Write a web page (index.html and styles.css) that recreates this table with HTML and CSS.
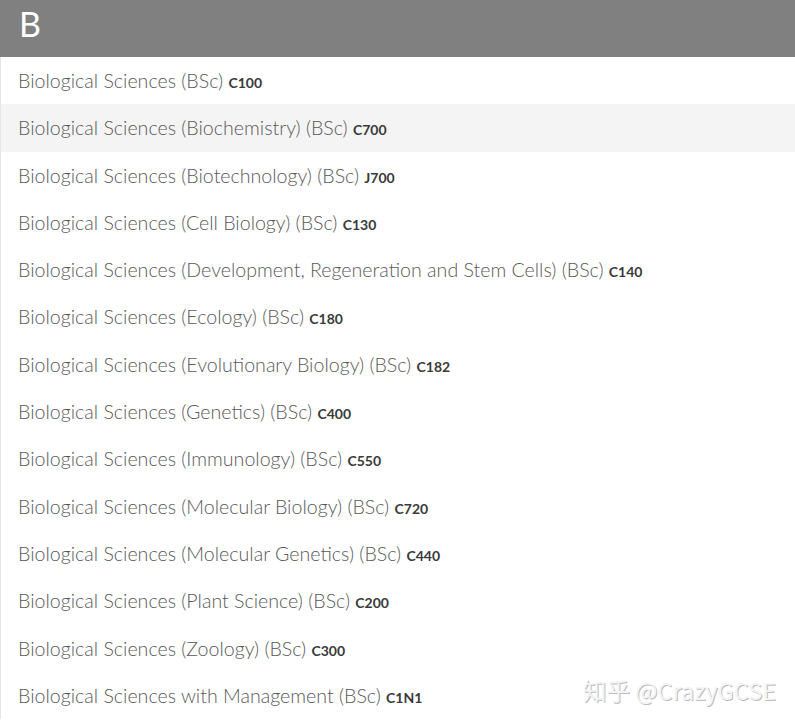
FILE: index.html
```html
<!DOCTYPE html>
<html lang="en">
<head>
    <meta charset="UTF-8">
    <title>Courses - B</title>
    <link rel="stylesheet" href="styles.css">
</head>
<body>
    <div class="letter-group">
        <h2 class="letter">B</h2>
        <ul class="courses">
            <li>Biological Sciences (BSc) <span class="code">C100</span></li>
            <li class="active">Biological Sciences (Biochemistry) (BSc) <span class="code">C700</span></li>
            <li>Biological Sciences (Biotechnology) (BSc) <span class="code">J700</span></li>
            <li>Biological Sciences (Cell Biology) (BSc) <span class="code">C130</span></li>
            <li>Biological Sciences (Development, Regeneration and Stem Cells) (BSc) <span class="code">C140</span></li>
            <li>Biological Sciences (Ecology) (BSc) <span class="code">C180</span></li>
            <li>Biological Sciences (Evolutionary Biology) (BSc) <span class="code">C182</span></li>
            <li>Biological Sciences (Genetics) (BSc) <span class="code">C400</span></li>
            <li>Biological Sciences (Immunology) (BSc) <span class="code">C550</span></li>
            <li>Biological Sciences (Molecular Biology) (BSc) <span class="code">C720</span></li>
            <li>Biological Sciences (Molecular Genetics) (BSc) <span class="code">C440</span></li>
            <li>Biological Sciences (Plant Science) (BSc) <span class="code">C200</span></li>
            <li>Biological Sciences (Zoology) (BSc) <span class="code">C300</span></li>
            <li>Biological Sciences with Management (BSc) <span class="code">C1N1</span></li>
        </ul>
    </div>
    <div class="watermark">知乎 @CrazyGCSE</div>
</body>
</html>
```

FILE: styles.css
```css
body {
    margin: 0;
    background-color: #fff;
    font-family: Lato, "Open Sans", sans-serif;
    position: relative;
    height: 728px;
    overflow: hidden;
}
.letter {
    margin: 0;
    height: 57px;
    background-color: #808080;
    color: #fff;
    font-size: 34px;
    font-weight: 400;
    line-height: 48px;
    padding-left: 19px;
}
.courses {
    list-style: none;
    margin: 0;
    padding: 0;
    border-left: 1px solid #e6e6e6;
}
.courses li {
    height: 47.3px;
    line-height: 48px;
    padding-left: 17px;
    font-size: 19.6px;
    font-weight: 300;
    color: #595959;
    white-space: nowrap;
}
.courses li.active {
    background-color: #f4f4f4;
}
.code {
    font-size: 14px;
    font-weight: 700;
    color: #3a3a3a;
}
.watermark {
    position: absolute;
    right: 19px;
    top: 673px;
    font-family: "Noto Sans CJK SC", sans-serif;
    font-size: 23.5px;
    color: #f4f4f4;
    text-shadow: 1px 1px 0 #bdbdbd;
}
```
